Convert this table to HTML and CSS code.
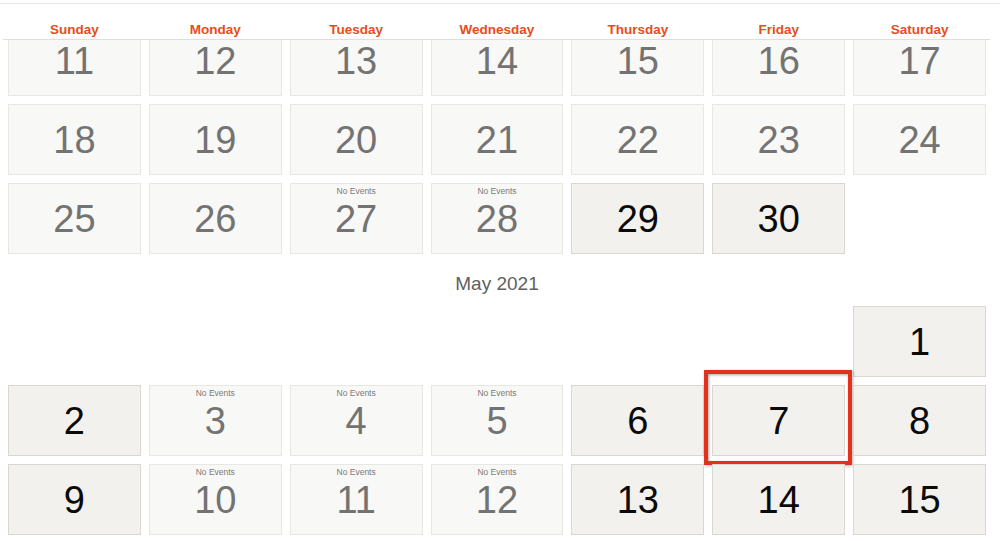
FILE: index.html
```html
<!DOCTYPE html>
<html>
<head>
<meta charset="utf-8">
<link rel="stylesheet" href="styles.css">
</head>
<body>
<div class="topbar"></div>
<div class="weekdays">
  <div>Sunday</div><div>Monday</div><div>Tuesday</div><div>Wednesday</div><div>Thursday</div><div>Friday</div><div>Saturday</div>
</div>
<div class="viewport">
  <div class="scroller">
    <div class="grid">
      <div class="cell past"><span class="lbl"></span><span class="num">11</span></div>
      <div class="cell past"><span class="lbl"></span><span class="num">12</span></div>
      <div class="cell past"><span class="lbl"></span><span class="num">13</span></div>
      <div class="cell past"><span class="lbl"></span><span class="num">14</span></div>
      <div class="cell past"><span class="lbl"></span><span class="num">15</span></div>
      <div class="cell past"><span class="lbl"></span><span class="num">16</span></div>
      <div class="cell past"><span class="lbl"></span><span class="num">17</span></div>

      <div class="cell past"><span class="lbl"></span><span class="num">18</span></div>
      <div class="cell past"><span class="lbl"></span><span class="num">19</span></div>
      <div class="cell past"><span class="lbl"></span><span class="num">20</span></div>
      <div class="cell past"><span class="lbl"></span><span class="num">21</span></div>
      <div class="cell past"><span class="lbl"></span><span class="num">22</span></div>
      <div class="cell past"><span class="lbl"></span><span class="num">23</span></div>
      <div class="cell past"><span class="lbl"></span><span class="num">24</span></div>

      <div class="cell past"><span class="lbl"></span><span class="num">25</span></div>
      <div class="cell past"><span class="lbl"></span><span class="num">26</span></div>
      <div class="cell past"><span class="lbl">No Events</span><span class="num">27</span></div>
      <div class="cell past"><span class="lbl">No Events</span><span class="num">28</span></div>
      <div class="cell open"><span class="lbl"></span><span class="num">29</span></div>
      <div class="cell open"><span class="lbl"></span><span class="num">30</span></div>
      <div class="blank"></div>
    </div>

    <div class="month">May 2021</div>

    <div class="grid">
      <div class="blank"></div><div class="blank"></div><div class="blank"></div><div class="blank"></div><div class="blank"></div><div class="blank"></div>
      <div class="cell open"><span class="lbl"></span><span class="num">1</span></div>

      <div class="cell open"><span class="lbl"></span><span class="num">2</span></div>
      <div class="cell past"><span class="lbl">No Events</span><span class="num">3</span></div>
      <div class="cell past"><span class="lbl">No Events</span><span class="num">4</span></div>
      <div class="cell past"><span class="lbl">No Events</span><span class="num">5</span></div>
      <div class="cell open"><span class="lbl"></span><span class="num">6</span></div>
      <div class="cell open selected"><span class="lbl"></span><span class="num">7</span><span class="mark"></span></div>
      <div class="cell open"><span class="lbl"></span><span class="num">8</span></div>

      <div class="cell open"><span class="lbl"></span><span class="num">9</span></div>
      <div class="cell past"><span class="lbl">No Events</span><span class="num">10</span></div>
      <div class="cell past"><span class="lbl">No Events</span><span class="num">11</span></div>
      <div class="cell past"><span class="lbl">No Events</span><span class="num">12</span></div>
      <div class="cell open"><span class="lbl"></span><span class="num">13</span></div>
      <div class="cell open"><span class="lbl"></span><span class="num">14</span></div>
      <div class="cell open"><span class="lbl"></span><span class="num">15</span></div>
    </div>
  </div>
</div>
</body>
</html>
```

FILE: styles.css
```css
html, body {
  margin: 0;
  padding: 0;
  background: #ffffff;
  font-family: "Liberation Sans", Arial, Helvetica, sans-serif;
  width: 1000px;
  height: 541px;
  overflow: hidden;
}

.topbar {
  height: 3px;
  border-bottom: 1px solid #e8e8e8;
}

.weekdays {
  margin-left: 3px;
  width: 987px;
  box-sizing: border-box;
  padding: 18px 4px 1px 5px;
  border-bottom: 1px solid #dedede;
  display: grid;
  grid-template-columns: repeat(7, 1fr);
  column-gap: 8px;
}

.weekdays div {
  text-align: center;
  color: #e84c1c;
  font-weight: bold;
  font-size: 13.5px;
  line-height: 16px;
}

.viewport {
  height: 501px;
  overflow: hidden;
}

.scroller {
  margin-top: -15px;
  padding-left: 8px;
  width: 978px;
}

.grid {
  display: grid;
  grid-template-columns: repeat(7, 1fr);
  grid-auto-rows: 71px;
  gap: 8px;
}

.cell {
  position: relative;
  box-sizing: border-box;
  border: 1px solid #e6e6e3;
  display: flex;
  flex-direction: column;
  align-items: center;
  padding-top: 2px;
}

.cell.past {
  background: #f8f8f6;
  border-color: #e7e7e4;
  color: #737373;
}

.cell.open {
  background: #f3f1ed;
  border-color: #dad7d0;
  color: #0a0a0a;
}

.lbl {
  display: block;
  height: 10px;
  font-size: 8.5px;
  line-height: 10px;
  color: #7a7a7a;
}

.num {
  display: block;
  font-size: 38px;
  line-height: 47px;
}

.month {
  text-align: center;
  padding: 20px 0 12px;
  font-size: 19px;
  line-height: 20px;
  color: #616161;
}

.mark {
  position: absolute;
  left: -9px;
  top: -16px;
  width: 148px;
  height: 95px;
  box-sizing: border-box;
  border: 4px solid #e5301c;
  box-shadow: inset 1px 1px 3px rgba(0, 0, 0, 0.35), 1px 1px 3px rgba(0, 0, 0, 0.3);
}
```
